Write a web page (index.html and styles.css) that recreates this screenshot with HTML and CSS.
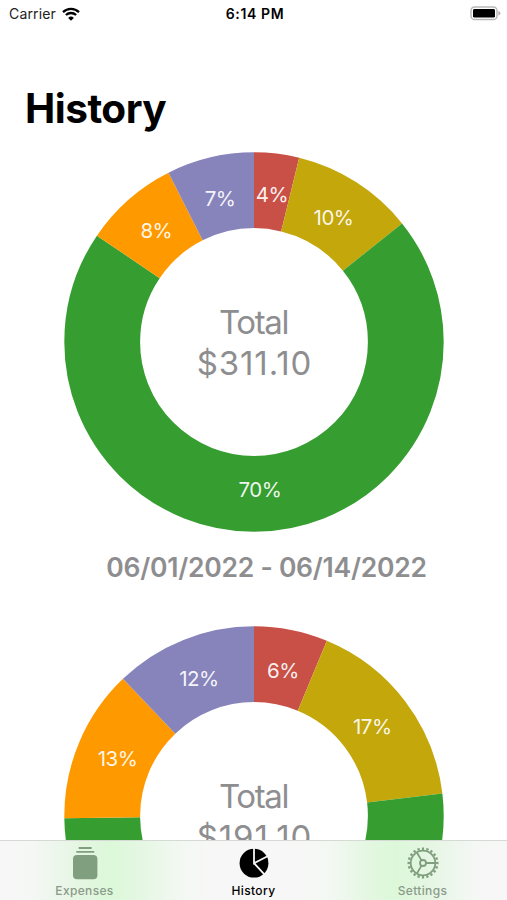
FILE: index.html
```html
<!DOCTYPE html>
<html lang="en">

<head>
    <meta charset="UTF-8">
    <meta name="viewport" content="width=device-width, initial-scale=1.0">
    <title>History</title>
    <link rel="stylesheet" href="styles.css">
</head>

<body>
    <!-- Status Bar -->
    <header class="status-bar">
        <div class="carrier">
            <span>Carrier</span>
            <svg class="wifi" viewBox="0 0 18 14">
                <path d="M1 5.1 A11.6 11.6 0 0 1 17 5.1" />
                <path d="M3.9 8 A7.5 7.5 0 0 1 14.1 8" />
                <path class="dot" d="M9 13.7 L6.2 10.9 A4 4 0 0 1 11.8 10.9 Z" />
            </svg>
        </div>
        <div class="time">6:14 PM</div>
        <div class="battery">
            <svg viewBox="0 0 31 15">
                <rect class="shell" x="1" y="1" width="26" height="12.6" rx="3.6" />
                <rect x="3" y="3" width="22" height="8.6" rx="1.4" />
                <path class="cap" d="M28.4 5 Q30.4 5.6 30.4 7.3 Q30.4 9 28.4 9.6 Z" />
            </svg>
        </div>
    </header>

    <!-- History -->
    <main class="history">
        <h1>History</h1>

        <section class="period">
            <svg class="donut" viewBox="0 0 380 380">
                <g class="slices">
                    <circle class="red" pathLength="360" r="151.8" stroke-dasharray="13.8 360" />
                    <circle class="yellow" pathLength="360" r="151.8" stroke-dasharray="37.5 360" stroke-dashoffset="-13.8" />
                    <circle class="green" pathLength="360" r="151.8" stroke-dasharray="252.8 360" stroke-dashoffset="-51.3" />
                    <circle class="orange" pathLength="360" r="151.8" stroke-dasharray="29.1 360" stroke-dashoffset="-304.1" />
                    <circle class="purple" pathLength="360" r="151.8" stroke-dasharray="26.8 360" stroke-dashoffset="-333.2" />
                </g>
                <g class="percent">
                    <text x="208" y="50">4%</text>
                    <text x="269.5" y="72.5">10%</text>
                    <text x="196" y="345">70%</text>
                    <text x="92.3" y="86">8%</text>
                    <text x="156" y="53.5">7%</text>
                </g>
                <g class="total">
                    <text x="189.5" y="182">Total</text>
                    <text class="amount" x="190.5" y="222.5">$311.10</text>
                </g>
            </svg>
            <h2>06/01/2022 - 06/14/2022</h2>
        </section>

        <section class="period">
            <svg class="donut" viewBox="0 0 380 380">
                <g class="slices">
                    <circle class="red" pathLength="360" r="151.8" stroke-dasharray="22.6 360" />
                    <circle class="yellow" pathLength="360" r="151.8" stroke-dasharray="60.6 360" stroke-dashoffset="-22.6" />
                    <circle class="green" pathLength="360" r="151.8" stroke-dasharray="186.1 360" stroke-dashoffset="-83.2" />
                    <circle class="orange" pathLength="360" r="151.8" stroke-dasharray="47 360" stroke-dashoffset="-269.3" />
                    <circle class="purple" pathLength="360" r="151.8" stroke-dasharray="43.7 360" stroke-dashoffset="-316.3" />
                </g>
                <g class="percent">
                    <text x="219" y="52">6%</text>
                    <text x="308.3" y="108">17%</text>
                    <text x="53.5" y="140">13%</text>
                    <text x="135" y="60">12%</text>
                </g>
                <g class="total">
                    <text x="189.5" y="182">Total</text>
                    <text class="amount" x="190.5" y="222.5">$191.10</text>
                </g>
            </svg>
        </section>
    </main>

    <!-- Tab Bar -->
    <nav class="tab-bar">
        <a class="tab">
            <svg viewBox="0 0 34 34">
                <path class="line" d="M10.7 2 H23.7 M8.3 5.8 H26.3" />
                <rect x="5" y="9" width="24.4" height="24.2" rx="4" />
            </svg>
            <span>Expenses</span>
        </a>
        <a class="tab active">
            <svg viewBox="0 0 34 34">
                <circle cx="17" cy="17.2" r="14.4" />
                <path class="cut" d="M17 1 V17.2 L31 10 M17 17.2 L27.6 28.6" />
            </svg>
            <span>History</span>
        </a>
        <a class="tab">
            <svg viewBox="0 0 34 34">
                <circle class="teeth" cx="17" cy="17" r="14.3" pathLength="360" />
                <circle class="ring" cx="17" cy="17" r="12.3" />
                <circle class="hub" cx="17" cy="17" r="3" />
                <path class="line" d="M20 17 H29 M15.5 14.4 L10.9 6.5 M15.5 19.6 L10.9 27.5" />
            </svg>
            <span>Settings</span>
        </a>
    </nav>
</body>

</html>
```
FILE: styles.css
```css
/* General Styles */
* {
    margin: 0;
    padding: 0;
    box-sizing: border-box;
}

body {
    height: 900px;
    overflow: hidden;
    display: flex;
    flex-direction: column;
    font-family: Inter, 'Liberation Sans', sans-serif;
    background: #fff;
    color: #000;
}

/* Status Bar */
.status-bar {
    display: grid;
    grid-template-columns: 1fr auto 1fr;
    align-items: center;
    height: 27px;
    padding: 0 6px 0 9px;
    flex: none;
    font-size: 14px;
}

.carrier {
    display: flex;
    align-items: center;
    gap: 6px;
    color: #222;
    letter-spacing: 0.15px;
}

.wifi {
    width: 18px;
    height: 14px;
    fill: none;
    stroke: #000;
    stroke-width: 2.3;
}

.wifi .dot {
    fill: #000;
    stroke: none;
}

.time {
    font-weight: 600;
    letter-spacing: 0.65px;
}

.battery {
    display: flex;
    justify-content: flex-end;
}

.battery svg {
    width: 31px;
    height: 15px;
}

.battery .shell {
    fill: #fff;
    stroke: #b9b9b9;
    stroke-width: 1.5;
}

.battery .cap {
    fill: #b0b0b0;
}

/* History */
.history {
    flex: 1;
    min-height: 0;
    overflow: hidden;
    padding-top: 57px;
}

.history h1 {
    height: 68px;
    padding-left: 25px;
    font-size: 40.5px;
    line-height: 50px;
    font-weight: 700;
    letter-spacing: -0.5px;
}

.period {
    height: 474px;
    display: flex;
    flex-direction: column;
    align-items: center;
}

.donut {
    width: 380px;
    height: 380px;
    flex: none;
    margin-left: 1px;
}

.slices {
    transform: translate(190px, 190px) rotate(-90deg);
    fill: none;
    stroke-width: 75.8;
}

.red {
    stroke: #c95046;
}

.yellow {
    stroke: #c4a70b;
}

.green {
    stroke: #369e30;
}

.orange {
    stroke: #ff9900;
}

.purple {
    stroke: #8784bc;
}

.percent {
    fill: #fff;
    fill-opacity: 0.93;
    font-size: 20.5px;
    letter-spacing: -0.5px;
    text-anchor: middle;
}

.total {
    fill: #8e8e90;
    font-size: 33px;
    letter-spacing: -1.4px;
    text-anchor: middle;
}

.total .amount {
    letter-spacing: 0.9px;
}

.period h2 {
    margin: 17px 0 0 26px;
    font-size: 26.5px;
    line-height: 36px;
    font-weight: 600;
    letter-spacing: -0.25px;
    color: #8e8e90;
    white-space: nowrap;
}

/* Tab Bar */
.tab-bar {
    height: 60px;
    flex: none;
    display: grid;
    grid-template-columns: repeat(3, 1fr);
    border-top: 1px solid #d5dad5;
    background: linear-gradient(90deg, #f7f7f7 0%, #f5f7f5 6%, #e4f6e2 16%, #dcf8d9 22%, #e3f7e1 27%, #f4f8f3 36%, #f7f7f7 42%, #f7f7f7 58%, #f4f8f3 65%, #e3f7e1 73%, #dcf8d9 78%, #e4f6e2 84%, #f5f7f5 94%, #f7f7f7 100%);
}

.tab {
    display: flex;
    flex-direction: column;
    align-items: center;
    padding-top: 5px;
    font-size: 12px;
    line-height: 16px;
    font-weight: 500;
    letter-spacing: 0.35px;
    color: #8b9a8a;
}

.tab svg {
    width: 34px;
    height: 34px;
    margin-bottom: 3px;
    fill: #809f7e;
}

.tab .line,
.tab .ring,
.tab .hub {
    fill: none;
    stroke: #809f7e;
    stroke-width: 1.8;
}

.tab .teeth {
    fill: none;
    stroke: #809f7e;
    stroke-width: 2.4;
    stroke-dasharray: 9 9;
    stroke-dashoffset: 4.5;
}

.tab .cut {
    fill: none;
    stroke: #f7f7f7;
    stroke-width: 1.8;
}

.tab.active,
.tab.active svg {
    color: #000;
    fill: #000;
}
```
